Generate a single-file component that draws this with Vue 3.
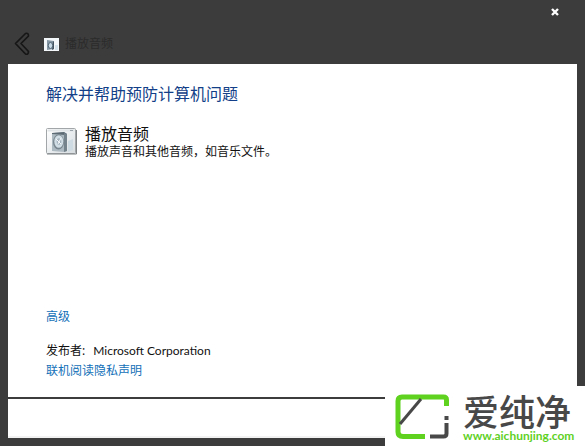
<template>
  <div class="window">
    <header class="titlebar">
      <button class="close" type="button" aria-label="关闭">
        <svg width="8" height="8" viewBox="0 0 8 8">
          <path d="M1 1l6 6M7 1l-6 6" stroke="#fff" stroke-width="2.4" />
        </svg>
      </button>
      <div class="nav">
        <button class="back" type="button" aria-label="返回">
          <svg width="16" height="24" viewBox="0 0 16 24">
            <path
              d="M11.500 1.500L1.500 11.500L11.500 22Q14.500 23 14.500 19.500L7 11.500L14.500 4Q14.500 .5 11.500 1.500Z"
              fill="#3c3c3c"
              stroke="#161616"
              stroke-width="1.700"
              stroke-linejoin="round"
            />
          </svg>
        </button>
        <svg class="small-icon" width="15" height="13" viewBox="0 0 15 13">
          <rect width="15" height="13" fill="#f4f7f9" />
          <path d="M3 2l7 1v8l-7 1z" fill="#8597a5" />
          <path d="M9 3l1 1v7l-2 1z" fill="#435360" />
          <ellipse cx="6.500" cy="7.500" rx="2.200" ry="3" fill="#c7d9e5" stroke="#526676" />
          <path d="M11 7h3v5h-3z" fill="#d5e3ed" />
        </svg>
        <span class="nav-title">{{ title }}</span>
      </div>
    </header>

    <main class="content">
      <h1>解决并帮助预防计算机问题</h1>

      <section class="item">
        <svg class="icon" width="31" height="27" viewBox="0 0 31 27">
          <defs>
            <linearGradient id="panel" x1="0" y1="0" x2="1" y2="1">
              <stop offset="0" stop-color="#fff" />
              <stop offset="1" stop-color="#d7dde0" />
            </linearGradient>
          </defs>
          <rect x="0.500" y="0.500" width="29" height="25" rx="1" fill="url(#panel)" stroke="#a3a6a8" />
          <path d="M1 26h29.500V2" fill="none" stroke="#7f8385" />
          <path d="M1.500 2.500h27" stroke="#e1e5e7" stroke-width="2" />
          <path d="M24 2.500h3" stroke="#9aa4aa" stroke-width="1" />
          <path d="M6 5l12-1 3 2v17l-3 1-12-1z" fill="#aebac2" />
          <path d="M6 5l12-1 3 2-2 1-13-1z" fill="#5d6b75" />
          <path d="M18 5l3 1v17l-3 1z" fill="#75838d" />
          <ellipse cx="12.500" cy="14" rx="5.500" ry="7.500" fill="#78868f" />
          <ellipse cx="12.800" cy="13.500" rx="4.500" ry="6.300" fill="#d2dee5" />
          <ellipse cx="13" cy="13.500" rx="2.300" ry="3.300" fill="#a5b4be" />
          <path d="M10 11l5 5M15 10l-3 6" stroke="#f5f8fa" />
          <path d="M22 13l5-2v11l-5 2z" fill="#cfdbe3" />
        </svg>
        <div class="item-text">
          <h2>{{ title }}</h2>
          <p>播放声音和其他音频，如音乐文件。</p>
        </div>
      </section>

      <div class="info">
        <a href="#">高级</a>
        <p class="publisher">
          <span>发布者:</span>
          <span class="company">Microsoft Corporation</span>
        </p>
        <a href="#">联机阅读隐私声明</a>
      </div>
    </main>

    <footer class="footer"></footer>

    <aside class="watermark">
      <svg class="logo" width="56" height="46" viewBox="0 0 56 46">
        <path
          d="M51.500 12V6Q51.500 3 48.500 3H7Q3 3 3 7V38Q3 42.500 8 42.500H30"
          fill="none"
          stroke="#5fd11f"
          stroke-width="5"
        />
        <path d="M5 30L26 5" stroke="#484848" stroke-width="3" />
        <path d="M51.500 22v4M51.500 29v10.500q0 3-3 3H35" fill="none" stroke="#484848" stroke-width="4" />
      </svg>
      <div class="brand">
        <strong>爱纯净</strong>
        <span>www.aichunjing.com</span>
      </div>
    </aside>
  </div>
</template>

<script setup>
const title = "播放音频";
</script>

<style>
body {
  margin: 0;
}
</style>

<style scoped>
.window {
  position: relative;
  box-sizing: border-box;
  min-height: 100vh;
  padding: 0 8px 8px;
  display: flex;
  flex-direction: column;
  background: #3c3c3c;
  color: #111;
  font-family: "Noto Sans", "Noto Sans CJK SC", sans-serif;
  font-size: 12px;
  line-height: 16px;
}

h1,
h2,
p {
  margin: 0;
  font-weight: 400;
}

button {
  display: flex;
  align-items: center;
  justify-content: center;
  padding: 0;
  border: 0;
  background: none;
  cursor: pointer;
}

a {
  color: #1270b8;
  text-decoration: none;
}

.titlebar {
  height: 64px;
  display: flex;
  flex-direction: column;
}

.close {
  align-self: flex-end;
  width: 16px;
  height: 24px;
  margin-right: 14px;
}

.nav {
  display: flex;
  align-items: center;
  height: 40px;
  padding-left: 6px;
}

.small-icon {
  margin-left: 14px;
}

.nav-title {
  margin-left: 6px;
  color: #2b2b2b;
}

.content {
  flex: 1;
  display: flex;
  flex-direction: column;
  padding: 20px 38px 18px;
  background: #fff;
}

h1 {
  color: #123f88;
  font-size: 16px;
  line-height: 20px;
}

.item {
  display: flex;
  gap: 8px;
  margin-top: 20px;
}

.icon {
  margin-top: 4px;
}

h2 {
  font-size: 16px;
  line-height: 20px;
}

.info {
  margin-top: auto;
  display: flex;
  flex-direction: column;
  align-items: flex-start;
}

.publisher {
  display: flex;
  align-items: baseline;
  gap: 8px;
  margin: 18px 0 4px;
}

.company {
  font-family: Lato, sans-serif;
}

.footer {
  box-sizing: border-box;
  height: 41px;
  border-top: 2px solid #3c3c3c;
  border-bottom: 2px solid #f2f2f2;
  background: #fff;
}

.watermark {
  position: absolute;
  right: 0;
  bottom: 0;
  box-sizing: border-box;
  width: 200px;
  height: 60px;
  padding: 8px 10px 4px;
  display: flex;
  gap: 12px;
  background: #fff;
}

.logo {
  flex: none;
}

.brand {
  display: flex;
  flex-direction: column;
  color: #484848;
  white-space: nowrap;
}

.brand strong {
  font-family: "Noto Sans CJK SC", sans-serif;
  font-size: 36px;
  font-weight: 500;
  line-height: 32px;
}

.brand span {
  color: #5fd11f;
  font-family: Lato, sans-serif;
  font-size: 12px;
  font-weight: 700;
  line-height: 20px;
}
</style>
